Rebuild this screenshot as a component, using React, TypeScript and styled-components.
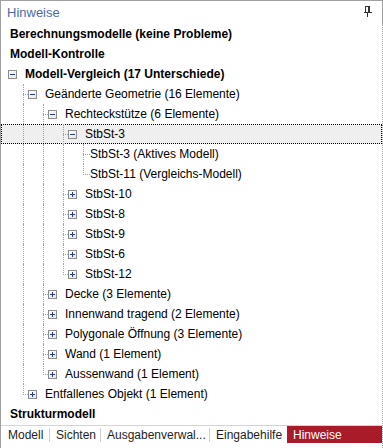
import React from 'react';
import styled, { createGlobalStyle } from 'styled-components';

const GlobalStyle = createGlobalStyle`
  html, body {
    margin: 0;
    padding: 0;
    background: #ffffff;
  }
  body {
    font-family: "Liberation Sans", Arial, sans-serif;
    font-size: 12px;
    color: #000000;
  }
`;

type TreeNode = {
  label: string;
  bold?: boolean;
  expanded?: boolean;
  selected?: boolean;
  children?: TreeNode[];
  collapsedChildren?: boolean;
};

type FlatRow = {
  node: TreeNode;
  level: number;
  isLast: boolean;
  guides: boolean[];
};

const collapsed = (label: string): TreeNode => ({ label, collapsedChildren: true });

const tree: TreeNode[] = [
  { label: 'Berechnungsmodelle (keine Probleme)', bold: true },
  { label: 'Modell-Kontrolle', bold: true },
  {
    label: 'Modell-Vergleich (17 Unterschiede)',
    bold: true,
    expanded: true,
    children: [
      {
        label: 'Geänderte Geometrie (16 Elemente)',
        expanded: true,
        children: [
          {
            label: 'Rechteckstütze (6 Elemente)',
            expanded: true,
            children: [
              {
                label: 'StbSt-3',
                expanded: true,
                selected: true,
                children: [
                  { label: 'StbSt-3 (Aktives Modell)' },
                  { label: 'StbSt-11 (Vergleichs-Modell)' },
                ],
              },
              collapsed('StbSt-10'),
              collapsed('StbSt-8'),
              collapsed('StbSt-9'),
              collapsed('StbSt-6'),
              collapsed('StbSt-12'),
            ],
          },
          collapsed('Decke (3 Elemente)'),
          collapsed('Innenwand tragend (2 Elemente)'),
          collapsed('Polygonale Öffnung (3 Elemente)'),
          collapsed('Wand (1 Element)'),
          collapsed('Aussenwand (1 Element)'),
        ],
      },
      collapsed('Entfallenes Objekt (1 Element)'),
    ],
  },
  { label: 'Strukturmodell', bold: true },
];

// guides[k] = the ancestor on level k still has siblings below, so its line runs on
const flatten = (nodes: TreeNode[], level = 0, guides: boolean[] = []): FlatRow[] =>
  nodes.flatMap((node, i) => {
    const isLast = i === nodes.length - 1;
    const row: FlatRow = { node, level, isLast, guides };
    const kids =
      node.expanded && node.children
        ? flatten(node.children, level + 1, [...guides, !isLast])
        : [];
    return [row, ...kids];
  });

const tabs = [
  { label: 'Modell', width: 48 },
  { label: 'Sichten', width: 50 },
  { label: 'Ausgabenverwal...', width: 108 },
  { label: 'Eingabehilfe', width: 74 },
];

const Panel = styled.div`
  width: 383px;
  height: 448px;
  box-sizing: border-box;
  display: flex;
  flex-direction: column;
  border-top: 1px solid #a0a0a0;
  border-left: 1px solid #a0a0a0;
  background: #ffffff;
`;

const Header = styled.div`
  height: 23px;
  display: flex;
  align-items: center;
  justify-content: space-between;
  padding: 0 10px 0 6px;
  border-right: 1px solid #a0a0a0;
`;

const Title = styled.span`
  font-size: 13px;
  color: #4e69a6;
  padding-bottom: 1px;
`;

const PinButton = styled.span`
  display: flex;
  align-items: center;
  margin-top: -2px;
`;

const Body = styled.div`
  flex: 1;
  display: flex;
  flex-direction: column;
  border-right: 1px dotted #a0a0a0;
`;

const Tree = styled.div`
  display: flex;
  flex-direction: column;
`;

const Row = styled.div<{ $selected?: boolean }>`
  height: 20px;
  box-sizing: border-box;
  display: flex;
  align-items: stretch;
  padding-left: 2px;
  background: ${({ $selected }) => ($selected ? '#efefef' : 'transparent')};
  outline: ${({ $selected }) => ($selected ? '1px dotted #000000' : 'none')};
  outline-offset: -1px;
`;

const GuideCell = styled.span<{ $line: boolean }>`
  width: 20px;
  flex: none;
  box-sizing: border-box;
  border-left: ${({ $line }) => ($line ? '1px dotted #a0a0a0' : '1px solid transparent')};
`;

const Connector = styled.span<{ $width: number; $lines: boolean; $last: boolean }>`
  width: ${({ $width }) => $width}px;
  flex: none;
  position: relative;

  &::before {
    content: '';
    display: ${({ $lines }) => ($lines ? 'block' : 'none')};
    position: absolute;
    left: 0;
    top: 0;
    height: ${({ $last }) => ($last ? '11px' : '20px')};
    border-left: 1px dotted #a0a0a0;
  }

  &::after {
    content: '';
    display: ${({ $lines }) => ($lines ? 'block' : 'none')};
    position: absolute;
    left: 0;
    right: 0;
    top: 10px;
    border-top: 1px dotted #a0a0a0;
  }
`;

const Expander = styled.span`
  width: 9px;
  height: 9px;
  flex: none;
  align-self: center;
  margin-right: 8px;
  display: flex;
`;

const Label = styled.span<{ $bold?: boolean }>`
  align-self: center;
  white-space: nowrap;
  font-weight: ${({ $bold }) => ($bold ? 700 : 400)};
  color: #000000;
  padding-bottom: 1px;
`;

const TabBar = styled.div`
  margin-top: 1px;
  border-top: 1px solid #d4d4d4;
  height: 22px;
  box-sizing: border-box;
  padding-bottom: 4px;
  display: flex;
  align-items: stretch;
`;

const Tab = styled.div<{ $width?: number; $active?: boolean }>`
  ${({ $width }) => ($width ? `width: ${$width}px;` : 'flex: 1;')}
  flex-shrink: 0;
  box-sizing: border-box;
  display: flex;
  align-items: center;
  padding-left: 6px;
  white-space: nowrap;
  overflow: hidden;
  color: ${({ $active }) => ($active ? '#ffffff' : '#1e1e1e')};
  background: ${({ $active }) => ($active ? '#a91b29' : 'transparent')};
  margin-left: ${({ $active }) => ($active ? '3px' : '0')};
  &:first-child {
    padding-left: 7px;
  }
`;

const TabSeparator = styled.span`
  width: 1px;
  height: 14px;
  align-self: center;
  background: #cfcfcf;
  flex: none;
`;

const ExpanderIcon: React.FC<{ open: boolean }> = ({ open }) => {
  const id = open ? 'expOpen' : 'expShut';
  return (
    <svg width="9" height="9" viewBox="0 0 9 9">
      <defs>
        <linearGradient id={id} x1="0" y1="0" x2="1" y2="1">
          <stop offset="0" stopColor="#ffffff" />
          <stop offset="1" stopColor="#e4e4e4" />
        </linearGradient>
      </defs>
      <rect x="0.5" y="0.5" width="8" height="8" fill={`url(#${id})`} stroke="#8d8d8d" />
      <rect x="2" y="4" width="5" height="1" fill="#2b3f7a" />
      {!open && <rect x="4" y="2" width="1" height="5" fill="#2b3f7a" />}
    </svg>
  );
};

const PinIcon: React.FC = () => (
  <svg width="8" height="11" viewBox="0 0 8 11">
    <rect x="1.5" y="0.5" width="4" height="6" fill="none" stroke="#333333" />
    <rect x="4" y="1" width="1" height="5" fill="#333333" />
    <rect x="0" y="6" width="8" height="1" fill="#333333" />
    <rect x="3" y="7" width="1" height="4" fill="#333333" />
  </svg>
);

const TreeRow: React.FC<{ row: FlatRow }> = ({ row }) => {
  const { node, level, isLast, guides } = row;
  const expandable = !!(node.children || node.collapsedChildren);
  return (
    <Row $selected={node.selected}>
      {Array.from({ length: level }, (_, k) => (
        <GuideCell key={k} $line={k >= 1 && guides[k]} />
      ))}
      <Connector $width={expandable ? 5 : 7} $lines={level >= 1} $last={isLast} />
      {expandable && (
        <Expander>
          <ExpanderIcon open={!!node.expanded} />
        </Expander>
      )}
      <Label $bold={node.bold}>{node.label}</Label>
    </Row>
  );
};

export default function App() {
  const rows = flatten(tree);
  return (
    <>
      <GlobalStyle />
      <Panel>
        <Header>
          <Title>Hinweise</Title>
          <PinButton>
            <PinIcon />
          </PinButton>
        </Header>
        <Body>
          <Tree>
            {rows.map((row, i) => (
              <TreeRow key={i} row={row} />
            ))}
          </Tree>
          <TabBar>
            {tabs.map((tab, i) => (
              <React.Fragment key={tab.label}>
                {i > 0 && <TabSeparator />}
                <Tab $width={tab.width}>{tab.label}</Tab>
              </React.Fragment>
            ))}
            <Tab $active>Hinweise</Tab>
          </TabBar>
        </Body>
      </Panel>
    </>
  );
}
